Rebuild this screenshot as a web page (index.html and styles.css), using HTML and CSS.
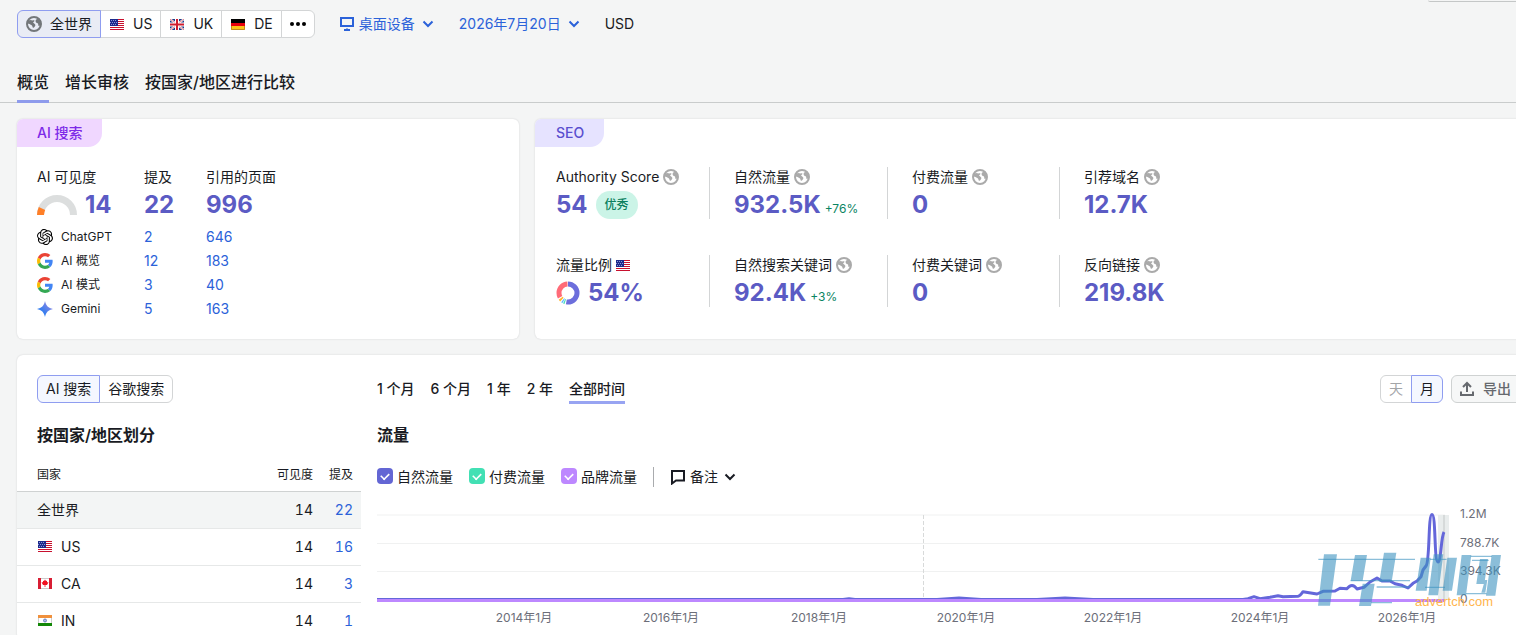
FILE: index.html
```html
<!DOCTYPE html>
<html lang="zh-CN">
<head>
    <meta charset="UTF-8">
    <meta name="viewport" content="width=device-width, initial-scale=1.0">
    <title>域名概览</title>
    <link rel="stylesheet" href="styles.css">
</head>
<body>

<!-- shared icons -->
<svg class="sprite" aria-hidden="true">
    <symbol id="globe" viewBox="0 0 16 16">
        <circle cx="8" cy="8" r="7" fill="none" stroke="currentColor" stroke-width="2"/>
        <path fill="currentColor" d="M1.500 5 4 4l3 .5 1-.5.5 1L7 6.500l1.500 1.200 1 1.300-1 2-1.500 1-1-2.500L3.500 8 1.500 7.500zM10 3.500l3-1 2 4-.5 3-2 .5-.5-2.500-2-1-.5-1.500z"/>
    </symbol>
    <symbol id="chevron" viewBox="0 0 12 12">
        <path d="M1.500 3.500 6 8l4.500-4.500" fill="none" stroke="currentColor" stroke-width="2"/>
    </symbol>
    <symbol id="flag-us" viewBox="0 0 14 11">
        <path fill="#fff" d="M0 0h14v11H0z"/>
        <path stroke="#c8102e" d="M0 .5h14M0 2.500h14M0 4.500h14M0 6.500h14M0 8.500h14M0 10.500h14"/>
        <path fill="#1c2a8c" d="M0 0h8v7H0z"/>
        <path stroke="#8a94d6" stroke-dasharray="1 1" d="M1 1.500h6M0 3.500h7M1 5.500h6"/>
    </symbol>
    <symbol id="flag-uk" viewBox="0 0 14 11">
        <path fill="#1f3c88" d="M0 0h14v11H0z"/>
        <path stroke="#fff" stroke-width="2" d="m0 0 14 11M14 0 0 11"/>
        <path stroke="#d01c2e" stroke-width=".6" d="m0 0 14 11M14 0 0 11"/>
        <path stroke="#fff" stroke-width="4" d="M7 0v11M0 5.500h14"/>
        <path stroke="#d01c2e" stroke-width="2" d="M7 0v11M0 5.500h14"/>
    </symbol>
    <symbol id="flag-de" viewBox="0 0 14 11">
        <path d="M0 0h14v4H0z"/>
        <path fill="#e8000d" d="M0 4h14v3H0z"/>
        <path fill="#fcc419" d="M0 7h14v4H0z"/>
        <path fill="none" stroke="#c48a1c" d="M.5 7v3.500h13V7"/>
    </symbol>
    <symbol id="flag-ca" viewBox="0 0 14 11">
        <path fill="#fff" d="M0 0h14v11H0z"/>
        <path fill="#d81e34" d="M0 0h3v11H0zM11 0h3v11h-3z"/>
        <path fill="#f01020" d="m7 1.500 1 1.500 1-.3v1.500h1.500L9 7H7.400v2h-.8V7H5L3.500 4.200H5V2.700l1 .3z"/>
        <path stroke="#ccc" d="M3 .5h8M3 10.500h8"/>
    </symbol>
    <symbol id="flag-in" viewBox="0 0 14 11">
        <path fill="#fff" d="M0 0h14v11H0z"/>
        <path fill="#f0903c" d="M0 0h14v3H0z"/>
        <path fill="#138808" d="M0 8h14v3H0z"/>
        <path stroke="#ccc" d="M.5 3v5M13.500 3v5"/>
        <circle cx="7" cy="5.500" r="1.500" fill="#b4bfe0" stroke="#6a80c0"/>
    </symbol>
    <symbol id="google" viewBox="0 0 48 48">
        <path fill="#ea4335" d="M24 9.500c3.540 0 6.710 1.220 9.210 3.600l6.850-6.850C35.900 2.380 30.470 0 24 0 14.620 0 6.510 5.380 2.560 13.220l7.980 6.190C12.430 13.720 17.740 9.500 24 9.500z"/>
        <path fill="#4285f4" d="M46.980 24.550c0-1.570-.15-3.090-.38-4.550H24v9.020h12.940c-.58 2.960-2.260 5.480-4.780 7.180l7.730 6c4.510-4.180 7.090-10.360 7.090-17.650z"/>
        <path fill="#fbbc05" d="M10.530 28.590c-.48-1.450-.76-2.990-.76-4.590s.27-3.140.76-4.590l-7.980-6.190C.92 16.460 0 20.120 0 24s.92 7.540 2.560 10.780z"/>
        <path fill="#34a853" d="M24 48c6.480 0 11.930-2.130 15.890-5.810l-7.730-6c-2.150 1.450-4.920 2.300-8.160 2.300-6.260 0-11.570-4.220-13.470-9.910l-7.980 6.190C6.510 42.620 14.620 48 24 48z"/>
    </symbol>
    <symbol id="openai" viewBox="0 0 24 24">
        <path d="M22.2819 9.8211a5.9847 5.9847 0 0 0-.5157-4.9108 6.0462 6.0462 0 0 0-6.5098-2.9A6.0651 6.0651 0 0 0 4.9807 4.1818a5.9847 5.9847 0 0 0-3.9977 2.9 6.0462 6.0462 0 0 0 .7427 7.0966 5.98 5.98 0 0 0 .511 4.9107 6.051 6.051 0 0 0 6.5146 2.9001A5.9847 5.9847 0 0 0 13.2599 24a6.0557 6.0557 0 0 0 5.7718-4.2058 5.9894 5.9894 0 0 0 3.9977-2.9001 6.0557 6.0557 0 0 0-.7475-7.0729zm-9.022 12.6081a4.4755 4.4755 0 0 1-2.8764-1.0408l.1419-.0804 4.7783-2.7582a.7948.7948 0 0 0 .3927-.6813v-6.7369l2.02 1.1686a.071.071 0 0 1 .038.052v5.5826a4.504 4.504 0 0 1-4.4945 4.4944zm-9.6607-4.1254a4.4708 4.4708 0 0 1-.5346-3.0137l.142.0852 4.783 2.7582a.7712.7712 0 0 0 .7806 0l5.8428-3.3685v2.3324a.0804.0804 0 0 1-.0332.0615L9.74 19.9502a4.4992 4.4992 0 0 1-6.1408-1.6464zM2.3408 7.8956a4.485 4.485 0 0 1 2.3655-1.9728V11.6a.7664.7664 0 0 0 .3879.6765l5.8144 3.3543-2.0201 1.1685a.0757.0757 0 0 1-.071 0l-4.8303-2.7865A4.504 4.504 0 0 1 2.3408 7.872zm16.5963 3.8558L13.1038 8.364 15.1192 7.2a.0757.0757 0 0 1 .071 0l4.8303 2.7913a4.4944 4.4944 0 0 1-.6765 8.1042v-5.6772a.79.79 0 0 0-.407-.667zm2.0107-3.0231l-.142-.0852-4.7735-2.7818a.7759.7759 0 0 0-.7854 0L9.409 9.2297V6.8974a.0662.0662 0 0 1 .0284-.0615l4.8303-2.7866a4.4992 4.4992 0 0 1 6.6802 4.66zM8.3065 12.863l-2.02-1.1638a.0804.0804 0 0 1-.038-.0567V6.0742a4.4992 4.4992 0 0 1 7.3757-3.4537l-.142.0805L8.704 5.459a.7948.7948 0 0 0-.3927.6813zm1.0976-2.3654l2.602-1.4998 2.6069 1.4998v2.9994l-2.5974 1.4997-2.6067-1.4997Z"/>
    </symbol>
    <symbol id="gemini" viewBox="0 0 16 16">
        <linearGradient id="gem" x1="0" y1="1" x2="1" y2="0">
            <stop offset=".3" stop-color="#2f7cf0"/>
            <stop offset="1" stop-color="#a78be0"/>
        </linearGradient>
        <path fill="url(#gem)" d="M8 0c.8 4.500 3.500 7.200 8 8-4.500.8-7.200 3.500-8 8-.8-4.500-3.500-7.200-8-8 4.500-.8 7.200-3.500 8-8z"/>
    </symbol>
</svg>

<header class="toolbar">
    <div class="pills">
        <button class="pill pill-first active"><svg class="icon globe-dark"><use href="#globe"/></svg>全世界</button>
        <button class="pill"><svg class="flag"><use href="#flag-us"/></svg>US</button>
        <button class="pill"><svg class="flag"><use href="#flag-uk"/></svg>UK</button>
        <button class="pill"><svg class="flag"><use href="#flag-de"/></svg>DE</button>
        <button class="pill" aria-label="更多">
            <svg class="icon" viewBox="0 0 16 16"><circle cx="2" cy="8" r="2"/><circle cx="8" cy="8" r="2"/><circle cx="14" cy="8" r="2"/></svg>
        </button>
    </div>
    <button class="link-btn device">
        <svg class="icon" viewBox="0 0 16 16"><path d="M2 2h12v8H2zM5 14h6M8 12.500V15" fill="none" stroke="currentColor" stroke-width="2"/></svg>
        桌面设备
        <svg class="chevron"><use href="#chevron"/></svg>
    </button>
    <button class="link-btn date">2026年7月20日 <svg class="chevron"><use href="#chevron"/></svg></button>
    <span class="currency">USD</span>
</header>
<div class="corner-box"></div>

<nav class="tabs">
    <a href="#" class="tab current">概览</a>
    <a href="#" class="tab">增长审核</a>
    <a href="#" class="tab">按国家/地区进行比较</a>
</nav>

<main class="content">
    <div class="summary">
        <section class="card ai-card">
            <h2 class="badge badge-ai">AI 搜索</h2>
            <table class="ai-table">
                <thead>
                    <tr><th class="col-name">AI 可见度</th><th class="col-mentions">提及</th><th>引用的页面</th></tr>
                </thead>
                <tbody>
                    <tr class="big">
                        <td>
                            <div class="score">
                                <svg class="gauge" viewBox="0 0 40 20">
                                    <path d="M3.500 20a16.500 16.500 0 0 1 33 0" fill="none" stroke="#dcdede" stroke-width="7"/>
                                    <path d="M3.500 20a16.500 16.500 0 0 1 1.500-6.500" fill="none" stroke="#ff7f27" stroke-width="7"/>
                                </svg>
                                14
                            </div>
                        </td>
                        <td>22</td>
                        <td>996</td>
                    </tr>
                    <tr><td><div class="engine"><svg class="icon"><use href="#openai"/></svg>ChatGPT</div></td><td><a href="#">2</a></td><td><a href="#">646</a></td></tr>
                    <tr><td><div class="engine"><svg class="icon"><use href="#google"/></svg>AI 概览</div></td><td><a href="#">12</a></td><td><a href="#">183</a></td></tr>
                    <tr><td><div class="engine"><svg class="icon"><use href="#google"/></svg>AI 模式</div></td><td><a href="#">3</a></td><td><a href="#">40</a></td></tr>
                    <tr><td><div class="engine"><svg class="icon"><use href="#gemini"/></svg>Gemini</div></td><td><a href="#">5</a></td><td><a href="#">163</a></td></tr>
                </tbody>
            </table>
        </section>

        <section class="card seo-card">
            <h2 class="badge badge-seo">SEO</h2>
            <div class="metrics">
                <div class="metric">
                    <div class="metric-label">Authority Score <svg class="icon"><use href="#globe"/></svg></div>
                    <div class="metric-value">54 <span class="rating">优秀</span></div>
                </div>
                <div class="metric">
                    <div class="metric-label">自然流量 <svg class="icon"><use href="#globe"/></svg></div>
                    <div class="metric-value">932.5K <span class="change">+76%</span></div>
                </div>
                <div class="metric">
                    <div class="metric-label">付费流量 <svg class="icon"><use href="#globe"/></svg></div>
                    <div class="metric-value">0</div>
                </div>
                <div class="metric">
                    <div class="metric-label">引荐域名 <svg class="icon"><use href="#globe"/></svg></div>
                    <div class="metric-value">12.7K</div>
                </div>
                <div class="metric">
                    <div class="metric-label">流量比例 <svg class="flag"><use href="#flag-us"/></svg></div>
                    <div class="metric-value">
                        <svg class="donut" viewBox="0 0 24 24" fill="none" stroke-width="5">
                            <circle cx="12" cy="12" r="9" stroke="#6c6edc" pathLength="100" stroke-dasharray="53 47" stroke-dashoffset="25"/>
                            <circle cx="12" cy="12" r="9" stroke="#45e0b8" pathLength="100" stroke-dasharray="2 98" stroke-dashoffset="-30"/>
                            <circle cx="12" cy="12" r="9" stroke="#59b8ff" pathLength="100" stroke-dasharray="2 98" stroke-dashoffset="-33"/>
                            <circle cx="12" cy="12" r="9" stroke="#ffb52e" pathLength="100" stroke-dasharray="3 97" stroke-dashoffset="-37"/>
                            <circle cx="12" cy="12" r="9" stroke="#ff6b78" pathLength="100" stroke-dasharray="32 68" stroke-dashoffset="-42"/>
                        </svg>
                        54%
                    </div>
                </div>
                <div class="metric">
                    <div class="metric-label">自然搜索关键词 <svg class="icon"><use href="#globe"/></svg></div>
                    <div class="metric-value">92.4K <span class="change">+3%</span></div>
                </div>
                <div class="metric">
                    <div class="metric-label">付费关键词 <svg class="icon"><use href="#globe"/></svg></div>
                    <div class="metric-value">0</div>
                </div>
                <div class="metric">
                    <div class="metric-label">反向链接 <svg class="icon"><use href="#globe"/></svg></div>
                    <div class="metric-value">219.8K</div>
                </div>
            </div>
        </section>
    </div>

    <section class="card details">
        <div class="countries">
            <div class="pills source">
                <button class="pill active">AI 搜索</button>
                <button class="pill">谷歌搜索</button>
            </div>
            <h3>按国家/地区划分</h3>
            <table class="country-table">
                <thead>
                    <tr><th>国家</th><th class="num">可见度</th><th class="num">提及</th></tr>
                </thead>
                <tbody>
                    <tr class="selected"><td>全世界</td><td class="num">14</td><td class="num"><a href="#">22</a></td></tr>
                    <tr><td><svg class="flag"><use href="#flag-us"/></svg>US</td><td class="num">14</td><td class="num"><a href="#">16</a></td></tr>
                    <tr><td><svg class="flag"><use href="#flag-ca"/></svg>CA</td><td class="num">14</td><td class="num"><a href="#">3</a></td></tr>
                    <tr><td><svg class="flag"><use href="#flag-in"/></svg>IN</td><td class="num">14</td><td class="num"><a href="#">1</a></td></tr>
                </tbody>
            </table>
        </div>

        <div class="traffic">
            <div class="traffic-head">
                <div class="ranges">
                    <button class="range">1 个月</button>
                    <button class="range">6 个月</button>
                    <button class="range">1 年</button>
                    <button class="range">2 年</button>
                    <button class="range current">全部时间</button>
                </div>
                <div class="pills">
                    <button class="pill muted">天</button>
                    <button class="pill active">月</button>
                </div>
                <button class="export">
                    <svg class="icon" viewBox="0 0 16 16" fill="none" stroke="currentColor" stroke-width="2"><path d="M8 11V2M4 6l4-4 4 4M2 10.500V14h12v-3.500"/></svg>
                    导出
                </button>
            </div>
            <h3>流量</h3>
            <div class="legend">
                <label class="check organic"><input type="checkbox" checked>自然流量</label>
                <label class="check paid"><input type="checkbox" checked>付费流量</label>
                <label class="check branded"><input type="checkbox" checked>品牌流量</label>
                <button class="notes">
                    <svg class="icon" viewBox="0 0 16 16" fill="none" stroke="currentColor" stroke-width="2"><path d="M2 2h12v9.500H6L2 14.500z"/></svg>
                    备注
                    <svg class="chevron"><use href="#chevron"/></svg>
                </button>
            </div>
            <svg class="chart" viewBox="0 0 1145 125">
                <path class="grid" d="M0 10h1068M0 38.500h1068M0 66.500h1068"/>
                <path class="marker" d="M546.500 10v85"/>
                <path fill="#e9eded" d="M1061 10h11v85h-11z"/>
                <path fill="#d6dada" d="M1066 10h2v85h-2z"/>
                <path class="line organic-line" d="M0 94.500H466l6-.8 6 .8H560l22-1.600 22 1.600H660l28-1.400 28 1.400H866L871 93.700 877 91.700 883 93.700 893 92.300 901 90.700 906 91.700 921 91.300Q923 91 926 86.700L940 89 946 86.300 958 86 963 83.300 970 83.700Q975 77 980 84L987 82.300 993 77 1000 73 1005 76H1013L1018 78.700 1025 80.300 1031 83 1036 78.300 1040 76 1044 71.700 1046 65 1049 61C1053 57 1051 9.500 1055 9.500S1057 57 1061 57C1064 57 1064 32 1067 27"/>
                <path class="line branded-line" d="M0 95.500h1067"/>
                <g class="axis">
                    <text x="1083" y="13">1.2M</text>
                    <text x="1083" y="42">788.7K</text>
                    <text x="1083" y="70">394.3K</text>
                    <text x="1083" y="98">0</text>
                </g>
                <g class="axis axis-x">
                    <text x="147" y="117">2014年1月</text>
                    <text x="294" y="117">2016年1月</text>
                    <text x="442" y="117">2018年1月</text>
                    <text x="589" y="117">2020年1月</text>
                    <text x="736" y="117">2022年1月</text>
                    <text x="883" y="117">2024年1月</text>
                    <text x="1030" y="117">2026年1月</text>
                </g>
                <!-- slanted brand mark over the plot -->
                <g class="stamp" transform="translate(933) scale(.3333)">
                    <path d="M42 148h39L60 302H24zM135 150h36l-13 77h-36zM222 143h37l-14 87h-37zM158 236h36l-11 67h-36zM332 158h30l-12 99h-33zM371 148h29l-16 123h-29zM412 158h29l-15 99h-28zM455 150h29l-16 121h-28zM545 150h28l-17 122h-28zM510 162h24l-11 75h-24zM525 225h7l-6 38h-12z"/>
                    <path d="M25 161h290v4H25zM122 225h178v4H122zM200 244h100v4H200zM183 291h63v4h-63zM360 161h50v4h-50zM345 245h60v4h-60zM482 152h64v4h-64zM486 164h50v4h-50zM468 264h62v4h-62z"/>
                </g>
                <text class="stamp-url" x="1038" y="101">advertch.com</text>
            </svg>
        </div>
    </section>
</main>

</body>
</html>
```
FILE: styles.css
```css
* {
    box-sizing: border-box;
}

body {
    margin: 0;
    background: #f4f5f5;
    color: #191b23;
    font: 14px/20px Inter, "Noto Sans CJK SC", sans-serif;
    overflow: hidden;
}

button {
    font: inherit;
    color: inherit;
    background: none;
    border: 0;
    padding: 0;
}

a {
    color: #2b62d9;
    text-decoration: none;
}

h2, h3 {
    margin: 0;
}

svg {
    flex: none;
}

.sprite {
    position: absolute;
    width: 0;
    height: 0;
}

.icon {
    width: 16px;
    height: 16px;
}

.chevron {
    width: 12px;
    height: 12px;
}

.flag {
    width: 14px;
    height: 11px;
}

/* toolbar */
.toolbar {
    display: flex;
    align-items: center;
    padding: 10px 17px 0;
}

.pills {
    display: flex;
}

.pill {
    display: flex;
    align-items: center;
    gap: 8px;
    height: 28px;
    padding: 0 8px;
    margin-left: -1px;
    border: 1px solid #d3d5d6;
    background: #fff;
}

.pill:first-child {
    margin-left: 0;
    border-radius: 6px 0 0 6px;
}

.pill:last-child {
    border-radius: 0 6px 6px 0;
}

.pill .flag {
    margin: 0 1px;
}

.pill.active {
    position: relative;
    border-color: #8f9df0;
    background: #f4f7ff;
}

.pill.pill-first {
    background: #e9ecf5;
}

.pill.muted {
    color: #a3a5a8;
}

.globe-dark {
    color: #73777a;
}

.link-btn {
    display: flex;
    align-items: center;
    color: #2b62d9;
}

.device {
    margin-left: 24px;
    gap: 4px;
}

.device .chevron {
    margin-left: 3px;
}

.date {
    margin-left: 25px;
    gap: 7px;
}

.currency {
    margin-left: 25px;
}

.corner-box {
    position: absolute;
    top: 0;
    right: 0;
    width: 88px;
    height: 2px;
    border-bottom: 1px solid #c4c7c7;
    border-radius: 0 0 0 6px;
}

/* tabs */
.tabs {
    display: flex;
    gap: 16px;
    margin-top: 32px;
    padding: 0 17px;
    border-bottom: 1px solid #c9cccc;
}

.tab {
    height: 33px;
    margin-bottom: -1px;
    font-size: 16px;
    font-weight: 500;
    line-height: 24px;
    color: #191b23;
}

.tab.current {
    border-bottom: 3px solid #8e9bec;
}

/* cards run past the right edge of the window */
.content {
    margin-right: -26px;
    padding: 16px 0 0 17px;
}

.card {
    background: #fff;
    border-radius: 6px;
    box-shadow: 0 0 2px rgba(25, 27, 35, .16);
}

.summary {
    display: flex;
    gap: 16px;
}

.ai-card {
    width: 502px;
    height: 220px;
}

.seo-card {
    flex: 1;
}

.badge {
    width: max-content;
    padding: 4px 20px;
    border-radius: 6px 0 14px 0;
    font-size: 14px;
    font-weight: 500;
}

.badge-ai {
    background: #f0d7ff;
    color: #7d2ae8;
}

.badge-seo {
    padding-left: 21px;
    background: #e6e3ff;
    color: #5a4fcf;
}

.ai-table {
    margin: 20px 0 0 20px;
    border-collapse: collapse;
}

.ai-table th {
    height: 20px;
    padding: 0;
    text-align: left;
    font-weight: 400;
}

.ai-table td {
    height: 24px;
    padding: 0;
}

.col-name {
    width: 107px;
}

.col-mentions {
    width: 62px;
}

.ai-table .big td {
    height: 38px;
    padding-bottom: 3px;
    font-size: 24px;
    font-weight: 700;
    color: #5b5bc4;
}

.score {
    display: flex;
    align-items: center;
    gap: 8px;
}

.gauge {
    width: 40px;
    height: 20px;
}

.engine {
    display: flex;
    align-items: center;
    gap: 8px;
    font-size: 12px;
}

.metrics {
    display: grid;
    grid-template-columns: 153px 178px 172px 200px;
    gap: 36px 0;
    padding: 20px 20px 0 21px;
}

.metric {
    height: 52px;
    border-left: 1px solid #d3d5d6;
    padding-left: 24px;
}

.metric:nth-child(4n+1) {
    border-left: 0;
    padding-left: 0;
}

.metric-label {
    display: flex;
    align-items: center;
    gap: 4px;
    height: 20px;
}

.metric-label .icon {
    color: #aaa;
}

.metric-value {
    display: flex;
    align-items: center;
    gap: 8px;
    height: 36px;
    font-size: 24px;
    font-weight: 700;
    color: #5b5bc4;
}

.rating {
    padding: 4px 9px;
    border-radius: 14px;
    background: #cbf4e7;
    color: #0b7f5e;
    font-size: 12px;
    font-weight: 500;
}

.change {
    margin: 8px 0 0 -4px;
    font-size: 12px;
    font-weight: 400;
    color: #0b8562;
}

.donut {
    width: 24px;
    height: 24px;
}

/* countries and traffic */
.details {
    display: flex;
    gap: 16px;
    margin-top: 16px;
    padding: 20px 20px 0 0;
}

.countries {
    width: 344px;
}

.source {
    padding-left: 20px;
}

h3 {
    margin-top: 20px;
    font-size: 16px;
    font-weight: 600;
    line-height: 24px;
}

.countries h3 {
    padding-left: 20px;
}

.country-table {
    width: 100%;
    margin-top: 12px;
    border-collapse: collapse;
    font-variant-numeric: tabular-nums;
}

.country-table th {
    height: 32px;
    padding: 0 0 0 20px;
    font-size: 12px;
    font-weight: 400;
    text-align: left;
    border-bottom: 1px solid #cfd2d2;
}

.country-table td {
    height: 37px;
    padding: 0 0 0 20px;
    border-bottom: 1px solid #e6e8e8;
}

.country-table td .flag {
    margin: 0 9px 0 1px;
}

.country-table .num {
    padding: 0 0 0 8px;
    text-align: right;
}

.country-table .num:last-child {
    width: 48px;
    padding-right: 8px;
}

.selected {
    background: #f3f5f5;
}

.traffic {
    flex: 1;
}

.traffic-head {
    display: flex;
    gap: 8px;
}

.ranges {
    display: flex;
    flex: 1;
    gap: 16px;
}

.range {
    height: 29px;
    padding-top: 2px;
    font-weight: 500;
    border-bottom: 3px solid transparent;
}

.range.current {
    border-color: #98a4f2;
}

.export {
    display: flex;
    align-items: center;
    gap: 8px;
    height: 28px;
    padding: 0 10px 0 7px;
    border: 1px solid #cfd2d2;
    border-radius: 6px;
    background: #f6f7f7;
    color: #66696e;
    font-weight: 500;
}

.traffic h3 {
    margin-top: 19px;
}

.legend {
    display: flex;
    gap: 16px;
    align-items: center;
    height: 20px;
    margin-top: 20px;
}

.check {
    display: flex;
    align-items: center;
    gap: 4px;
}

.check input {
    appearance: none;
    display: grid;
    place-content: center;
    width: 16px;
    height: 16px;
    margin: 0 0 2px;
    border-radius: 4px;
}

.check input:checked::before {
    content: "";
    width: 8px;
    height: 5px;
    margin-bottom: 2px;
    border: solid #fff;
    border-width: 0 0 2px 2px;
    transform: rotate(-45deg) scale(.8);
}

.organic input {
    background: #6366d4;
}

.paid input {
    background: #42e0b4;
}

.branded input {
    background: #bd88ff;
}

.notes {
    display: flex;
    align-items: center;
    gap: 4px;
    padding-left: 16px;
    border-left: 1px solid #a9abae;
}

.notes .chevron {
    margin-left: 2px;
}

.chart {
    display: block;
    width: 100%;
    margin-top: 18px;
}

.grid {
    fill: none;
    stroke: #f0f1f1;
}

.marker {
    stroke: #d8dada;
    stroke-dasharray: 4 2;
}

.line {
    fill: none;
    stroke-width: 3;
    stroke-linejoin: round;
}

.organic-line {
    stroke: #6467da;
}

.branded-line {
    stroke: #bd88ff;
}

.axis {
    font-size: 12px;
    fill: #6c6e79;
}

.axis-x {
    text-anchor: middle;
}

.stamp {
    fill: #3d92bf;
    fill-opacity: .6;
}

.stamp-url {
    font: 13px "Liberation Sans", sans-serif;
    fill: #ffb54d;
}
```
